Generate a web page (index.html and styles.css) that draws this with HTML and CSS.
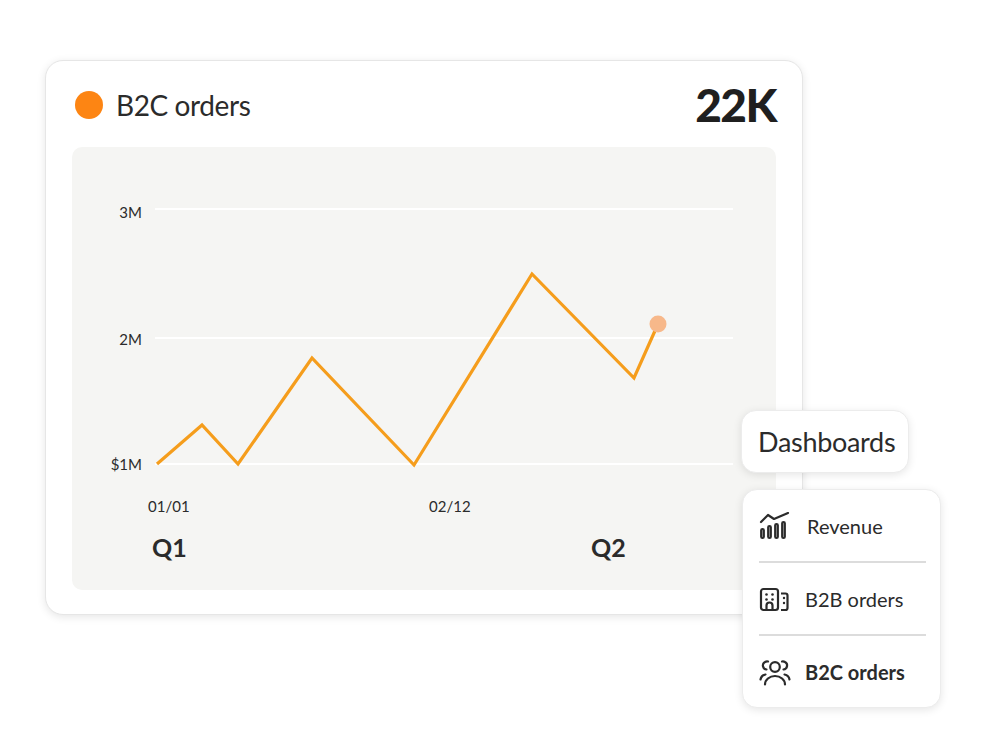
FILE: index.html
```html
<!DOCTYPE html>
<html>
<head>
<meta charset="utf-8">
<link rel="stylesheet" href="styles.css">
</head>
<body>
<div class="stage">
  <div class="card">
    <div class="card-head">
      <div class="title">
        <span class="dot"></span>
        <span class="title-text">B2C orders</span>
      </div>
      <div class="kpi">22K</div>
    </div>
    <div class="chart">
      <svg class="chart-svg" viewBox="72 147 704 443" width="704" height="443">
        <g class="grid">
          <line x1="155" y1="209" x2="733" y2="209"/>
          <line x1="155" y1="338" x2="733" y2="338"/>
          <line x1="155" y1="464" x2="733" y2="464"/>
        </g>
        <g class="ylab">
          <text x="142" y="218">3M</text>
          <text x="142" y="345">2M</text>
          <text x="142" y="470">$1M</text>
        </g>
        <g class="xlab">
          <text x="148" y="512">01/01</text>
          <text x="429" y="512">02/12</text>
        </g>
        <g class="qlab">
          <text x="152" y="557">Q1</text>
          <text x="591" y="557">Q2</text>
        </g>
        <polyline class="series" points="157,464 202,425 238,464 312,358 414,465 532,274 634,378 658,324"/>
        <circle class="marker" cx="658" cy="324" r="8.5"/>
      </svg>
    </div>
  </div>

  <div class="pill">Dashboards</div>

  <div class="menu">
    <div class="menu-item">
      <svg class="icon" viewBox="0 0 32 28" width="32" height="28">
        <g fill="none" stroke="#2b2b2b" stroke-width="2.2" stroke-linecap="round" stroke-linejoin="round">
          <polyline points="2,10 9,3 15,7 29,1"/>
          <rect x="2.2" y="17" width="2.6" height="9" rx="1.3"/>
          <rect x="9.2" y="14" width="2.6" height="12" rx="1.3"/>
          <rect x="16.2" y="12" width="2.6" height="14" rx="1.3"/>
          <rect x="23.2" y="10" width="2.6" height="16" rx="1.3"/>
        </g>
      </svg>
      <span class="menu-text label-rev">Revenue</span>
    </div>
    <div class="menu-item">
      <svg class="icon" viewBox="0 0 32 28" width="32" height="28">
        <g fill="none" stroke="#2b2b2b" stroke-width="2.2" stroke-linejoin="round">
          <rect x="2" y="4" width="17" height="21" rx="2.5"/>
          <path d="M7.5 25 V20.5 a3 3 0 0 1 6 0 V25"/>
          <path d="M22 8.5 h4.5 a2 2 0 0 1 2 2 V23 a2 2 0 0 1 -2 2 H22"/>
        </g>
        <g fill="#2b2b2b">
          <circle cx="7.5" cy="9.5" r="1.3"/>
          <circle cx="13.5" cy="9.5" r="1.3"/>
          <circle cx="7.5" cy="14.5" r="1.3"/>
          <circle cx="13.5" cy="14.5" r="1.3"/>
          <circle cx="25" cy="13" r="1.2"/>
          <circle cx="25" cy="18" r="1.2"/>
        </g>
      </svg>
      <span class="menu-text">B2B orders</span>
    </div>
    <div class="menu-item">
      <svg class="icon" viewBox="0 0 32 28" width="32" height="28">
        <g fill="none" stroke="#2b2b2b" stroke-width="2.2" stroke-linecap="round">
          <circle cx="16" cy="9" r="4.8"/>
          <path d="M6 26.5 a10 8.5 0 0 1 20 0"/>
          <path d="M7.5 11.5 a4 4 0 0 1 -1.5 -7.5 a4 4 0 0 1 3 -0.5"/>
          <path d="M24.5 11.5 a4 4 0 0 0 1.5 -7.5 a4 4 0 0 0 -3 -0.5"/>
          <path d="M1.5 21.5 a6.5 6 0 0 1 5 -5"/>
          <path d="M30.5 21.5 a6.5 6 0 0 0 -5 -5"/>
        </g>
      </svg>
      <span class="menu-text bold">B2C orders</span>
    </div>
  </div>
</div>
</body>
</html>
```

FILE: styles.css
```css
* { box-sizing: border-box; }

html, body {
  margin: 0;
  padding: 0;
  background: #ffffff;
}

body {
  font-family: Lato, "Open Sans", "Liberation Sans", sans-serif;
  color: #2b2b2b;
}

.stage {
  position: relative;
  width: 1000px;
  height: 750px;
  padding: 60px 0 0 45px;
}

.card {
  width: 758px;
  height: 555px;
  background: #ffffff;
  border: 1px solid #e6e6e6;
  border-radius: 18px;
  box-shadow: 0 2px 8px rgba(0, 0, 0, 0.10);
  padding: 26px 26px 24px 26px;
  display: flex;
  flex-direction: column;
}

.card-head {
  height: 36px;
  display: flex;
  align-items: center;
  justify-content: space-between;
  margin-bottom: 24px;
}

.title {
  display: flex;
  align-items: center;
  gap: 13px;
  padding-left: 3px;
}

.dot {
  width: 28px;
  height: 28px;
  border-radius: 50%;
  background: #fd8513;
  display: block;
}

.title-text {
  font-size: 28px;
  font-weight: 400;
  letter-spacing: -0.4px;
}

.kpi {
  font-size: 46px;
  font-weight: 900;
  letter-spacing: -1.5px;
  line-height: 36px;
  color: #1f1f1f;
}

.chart {
  flex: 1;
  background: #f5f5f3;
  border-radius: 10px;
  overflow: hidden;
}

.chart-svg {
  display: block;
}

.grid line {
  stroke: #ffffff;
  stroke-width: 2;
}

.ylab text {
  text-anchor: end;
  font-size: 15px;
  fill: #2b2b2b;
}

.xlab text {
  font-size: 15px;
  fill: #2b2b2b;
}

.qlab text {
  font-size: 25px;
  font-weight: 700;
  fill: #2b2b2b;
}

.series {
  fill: none;
  stroke: #f59d1c;
  stroke-width: 3.2;
  stroke-linejoin: miter;
}

.marker {
  fill: #f7b88a;
}

.pill {
  position: absolute;
  left: 741px;
  top: 410px;
  width: 168px;
  height: 63px;
  background: #ffffff;
  border: 1px solid #ececec;
  border-radius: 15px;
  box-shadow: 0 2px 8px rgba(0, 0, 0, 0.10);
  display: flex;
  align-items: center;
  padding-left: 16px;
  font-size: 27px;
  letter-spacing: -0.3px;
}

.menu {
  position: absolute;
  left: 742px;
  top: 489px;
  width: 199px;
  height: 219px;
  background: #ffffff;
  border: 1px solid #ececec;
  border-radius: 15px;
  box-shadow: 0 2px 8px rgba(0, 0, 0, 0.10);
  padding: 0 14px 0 16px;
  display: flex;
  flex-direction: column;
}

.menu-item {
  flex: 1;
  display: flex;
  align-items: center;
  gap: 14px;
  border-bottom: 2px solid #dcdcdc;
}

.menu-item:last-child {
  border-bottom: none;
}

.icon {
  display: block;
  flex: none;
}

.menu-text {
  font-size: 20px;
}

.label-rev {
  margin-left: 2px;
}

.bold {
  font-weight: 700;
}
```
